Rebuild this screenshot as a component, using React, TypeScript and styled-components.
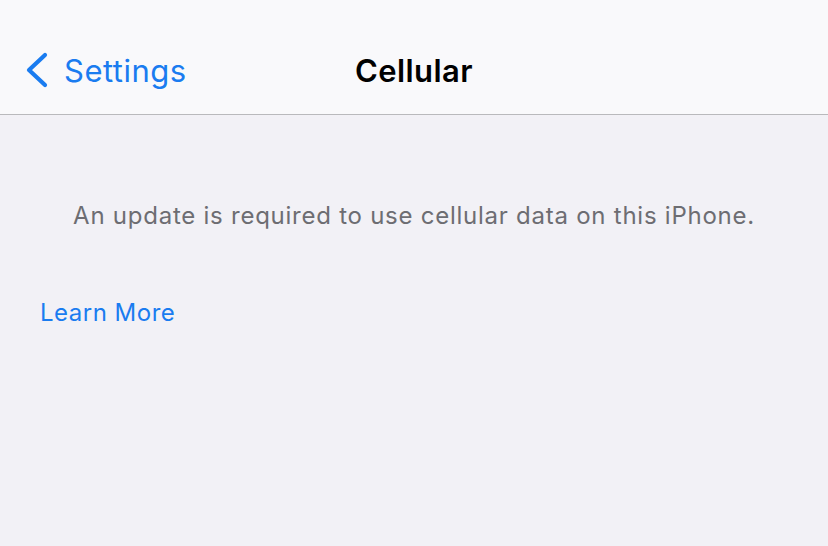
import styled, { createGlobalStyle } from 'styled-components';

const GlobalStyle = createGlobalStyle`
  html, body {
    margin: 0;
    padding: 0;
    background: #f2f1f6;
  }
  body {
    font-family: Inter, "Noto Sans", sans-serif;
    -webkit-font-smoothing: antialiased;
  }
`;

const Screen = styled.div`
  width: 828px;
  height: 546px;
  display: flex;
  flex-direction: column;
  background: #f2f1f6;
  overflow: hidden;
`;

const NavBar = styled.div`
  height: 115px;
  box-sizing: border-box;
  border-bottom: 1px solid #b9b9bc;
  background: #f9f9fb;
  display: grid;
  grid-template-columns: 1fr auto 1fr;
  align-items: center;
  padding-top: 26px;
`;

const BackButton = styled.div`
  display: flex;
  align-items: center;
  gap: 14px;
  padding-left: 24px;
  color: #1a7cf0;
  font-size: 31px;
  letter-spacing: 0.5px;
`;

const Title = styled.div`
  font-size: 31px;
  font-weight: 600;
  color: #000;
  letter-spacing: 0.4px;
`;

const Content = styled.div`
  display: flex;
  flex-direction: column;
  padding: 86px 40px 0;
`;

const Notice = styled.div`
  text-align: center;
  color: #6d6d72;
  font-size: 24px;
  letter-spacing: 0.75px;
`;

const LinkText = styled.div`
  margin-top: 68px;
  color: #1a7cf0;
  font-size: 24px;
  letter-spacing: 0.5px;
`;

function Chevron() {
  return (
    <svg width="26" height="36" viewBox="0 0 26 36">
      <path d="M21 3 L5 18 L21 33" fill="none" stroke="currentColor" strokeWidth="4.2" strokeLinecap="round" strokeLinejoin="round" />
    </svg>
  );
}

function App() {
  return (
    <Screen>
      <GlobalStyle />
      <NavBar>
        <BackButton>
          <Chevron />
          <span>Settings</span>
        </BackButton>
        <Title>Cellular</Title>
        <div />
      </NavBar>
      <Content>
        <Notice>An update is required to use cellular data on this iPhone.</Notice>
        <LinkText>Learn More</LinkText>
      </Content>
    </Screen>
  );
}

export default App;
